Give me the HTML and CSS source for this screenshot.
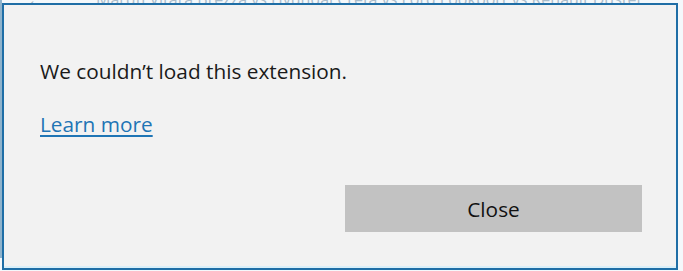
FILE: index.html
```html
<!DOCTYPE html>
<html>
<head>
<meta charset="utf-8">
<link rel="stylesheet" href="styles.css">
</head>
<body>
<div class="page">
  <div class="backdrop-bar">
    <span class="back-arrow">&#8592;</span>
    <span class="backdrop-title">Maruti Vitara Brezza vs Hyundai Creta vs Lord Lookport vs Renault Duster</span>
  </div>
</div>
<div class="dialog">
  <p class="message">We couldn’t load this extension.</p>
  <a class="learn" href="#">Learn more</a>
  <div class="actions">
    <button class="close-btn">Close</button>
  </div>
</div>
</body>
</html>
```
FILE: styles.css
```css
html, body {
  margin: 0;
  padding: 0;
}
body {
  width: 683px;
  height: 271px;
  overflow: hidden;
  background: #f4f8fb;
  font-family: "Open Sans", "Noto Sans", sans-serif;
  position: relative;
}
.page {
  height: 271px;
  border-left: 2px solid #8fb3cc;
  box-sizing: border-box;
}
.backdrop-bar {
  display: flex;
  align-items: center;
  gap: 50px;
  padding-left: 24px;
  margin-top: -13px;
  height: 24px;
  color: #a9bccb;
  font-size: 16px;
  white-space: nowrap;
}
.back-arrow {
  font-size: 20px;
  color: #9fb2c2;
}
.dialog {
  position: absolute;
  left: 2px;
  top: 3px;
  width: 676px;
  height: 267px;
  box-sizing: border-box;
  border: 2px solid #1f6ea6;
  background: #f2f2f2;
  box-shadow: inset 0 -2px 0 #d9eff9;
  display: flex;
  flex-direction: column;
  padding: 0 0 0 36px;
}
.message {
  margin: 52px 0 0 0;
  font-size: 20.8px;
  line-height: 28px;
  color: #1a1a1a;
}
.learn {
  margin-top: 25px;
  align-self: flex-start;
  font-size: 20.8px;
  line-height: 28px;
  color: #1f75b5;
  text-decoration: underline;
  text-underline-offset: 3px;
}
.actions {
  display: flex;
  justify-content: flex-end;
  padding-right: 34px;
  margin-top: 47px;
}
.close-btn {
  width: 297px;
  height: 47px;
  border: none;
  background: #c2c2c2;
  font-family: "Open Sans", "Noto Sans", sans-serif;
  font-size: 20.8px;
  color: #111;
  padding: 0;
}
```
